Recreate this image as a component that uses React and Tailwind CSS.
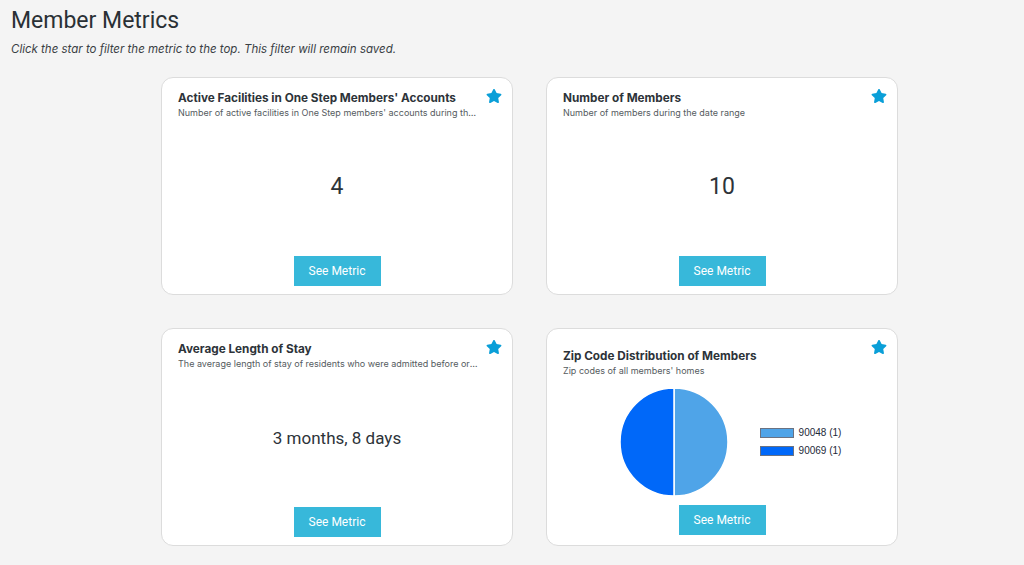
import React from 'react';
import { FaStar } from 'react-icons/fa';

const metrics = [
    {
        id: 'facilities',
        title: "Active Facilities in One Step Members' Accounts",
        description: "Number of active facilities in One Step members' accounts during the date range",
        value: '4',
    },
    {
        id: 'members',
        title: 'Number of Members',
        description: 'Number of members during the date range',
        value: '10',
    },
    {
        id: 'stay',
        title: 'Average Length of Stay',
        description: 'The average length of stay of residents who were admitted before or during the date range',
        value: '3 months, 8 days',
        small: true,
    },
    {
        id: 'zip',
        title: 'Zip Code Distribution of Members',
        description: "Zip codes of all members' homes",
        chart: [
            { label: '90048 (1)', color: '#4fa4e8' },
            { label: '90069 (1)', color: '#0068f9' },
        ],
    },
];

const PieChart = ({ slices }) => (
    <div className="flex items-center justify-center gap-[31px] pl-[16px]">
        <svg width="110" height="110" viewBox="0 0 110 110">
            <path d="M55 1 A54 54 0 0 1 55 109 Z" fill={slices[0].color} stroke="#fff" strokeWidth="1.5" />
            <path d="M55 109 A54 54 0 0 1 55 1 Z" fill={slices[1].color} stroke="#fff" strokeWidth="1.5" />
        </svg>
        <div className="flex flex-col gap-[4px]">
            {slices.map((s) => (
                <div key={s.label} className="flex items-center gap-[5px]">
                    <span className="w-[34px] h-[10px] border border-gray-500" style={{ backgroundColor: s.color }} />
                    <span className="text-[10px] leading-[14px] text-gray-800 font-['Liberation_Sans',sans-serif]">{s.label}</span>
                </div>
            ))}
        </div>
    </div>
);

const MetricCard = ({ metric }) => (
    <div className="relative h-[218px] bg-white rounded-xl border border-[#dcdcdc] flex flex-col px-4 pb-[8px]">
        <FaStar className="absolute top-[10px] right-[10px] text-[#0a9fd8] w-[16px] h-[16px]" />
        <div className={`font-['Inter',sans-serif] ${metric.chart ? 'pt-[19px]' : 'pt-[12px]'}`}>
            <h3 className="text-[11.75px] leading-[16px] font-bold text-[#2d3339] pr-6">{metric.title}</h3>
            <p className="text-[9px] leading-[14px] text-[#555b60] truncate pr-4">{metric.description}</p>
        </div>
        <div className="flex-1 flex items-center justify-center">
            {metric.chart ? (
                <PieChart slices={metric.chart} />
            ) : (
                <span className={`${metric.small ? 'text-[17px]' : 'text-[23px]'} text-[#2d3339] pb-[2px]`}>
                    {metric.value}
                </span>
            )}
        </div>
        <div className="flex justify-center">
            <button className={`w-[87px] h-[30px] bg-[#37b8da] text-white text-[12px] ${metric.chart ? 'mb-[2px]' : ''}`}>
                See Metric
            </button>
        </div>
    </div>
);

const App = () => (
    <div className="min-h-screen bg-[#f4f4f4] font-['Roboto',sans-serif] text-[#2d3339]">
        <div className="px-[11px] pt-[6px]">
            <h1 className="text-[23px] leading-[30px] text-[#2a3035]">Member Metrics</h1>
            <p className="text-[11.5px] italic text-[#3a3f44] mt-[5px] font-['Inter',sans-serif]">
                Click the star to filter the metric to the top. This filter will remain saved.
            </p>
        </div>
        <div className="ml-[161px] mt-[19px] w-[737px] grid grid-cols-2 gap-x-[33px] gap-y-[33px]">
            {metrics.map((m) => (
                <MetricCard key={m.id} metric={m} />
            ))}
        </div>
    </div>
);

export default App;
